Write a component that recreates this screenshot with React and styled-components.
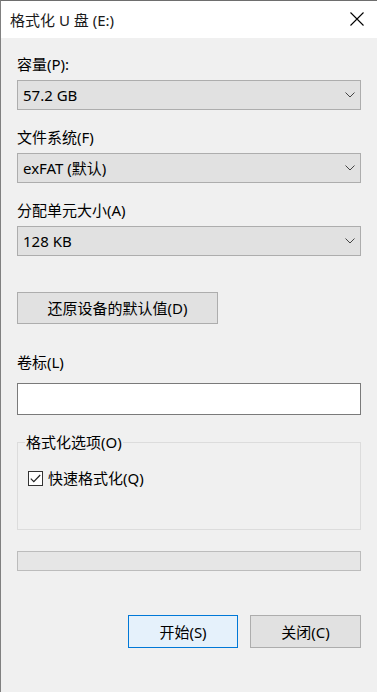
import React from "react";
import styled, { createGlobalStyle } from "styled-components";

const GlobalStyle = createGlobalStyle`
  html, body {
    margin: 0;
    padding: 0;
    background: #f0f0f0;
  }
  * {
    box-sizing: border-box;
  }
`;

const Window = styled.div`
  width: 377px;
  height: 692px;
  display: flex;
  flex-direction: column;
  background: #f0f0f0;
  border-top: 1px solid #6e6e6e;
  border-left: 1px solid #808080;
  font-family: "Noto Sans", "Noto Sans CJK SC", sans-serif;
  font-size: 15px;
  color: #000;
  overflow: hidden;
`;

const TitleBar = styled.div`
  height: 37px;
  flex: none;
  background: #fff;
  display: flex;
  align-items: center;
  justify-content: space-between;
  padding: 0 13px 0 9px;
`;

const Title = styled.span`
  font-size: 15px;
  line-height: 20px;
  color: #1a1a1a;
`;

const CloseX = styled.button`
  border: 0;
  background: transparent;
  padding: 0;
  width: 14px;
  height: 14px;
  display: flex;
  margin-top: -1px;
  cursor: pointer;
`;

const Body = styled.div`
  flex: 1;
  display: flex;
  flex-direction: column;
  padding: 0 16px;
`;

const FieldLabel = styled.div`
  line-height: 20px;
  margin-top: ${(p) => p.$top}px;
  margin-bottom: ${(p) => p.$bottom || 6}px;
`;

const Combo = styled.div`
  height: 30px;
  display: flex;
  align-items: center;
  justify-content: space-between;
  padding: 0 5px 0 5px;
  background: #e1e1e1;
  border: 1px solid #adadad;
  line-height: 20px;
`;

const Chevron = () => (
  <svg width="10" height="6" viewBox="0 0 10 6">
    <path d="M0.5 0.5 L5 5 L9.5 0.5" fill="none" stroke="#444" strokeWidth="1" />
  </svg>
);

const PushButton = styled.button`
  font: inherit;
  color: #000;
  height: ${(p) => p.$h || 33}px;
  width: ${(p) => p.$w}px;
  background: ${(p) => (p.$primary ? "#e5f1fb" : "#e1e1e1")};
  border: 1px solid ${(p) => (p.$primary ? "#0078d7" : "#adadad")};
  padding: 0;
  line-height: 20px;
  cursor: pointer;
`;

const RestoreButton = styled(PushButton)`
  margin-top: 36px;
  align-self: flex-start;
`;

const TextBox = styled.input`
  height: 32px;
  width: 100%;
  border: 1px solid #7a7a7a;
  background: #fff;
  font: inherit;
  padding: 0 4px;
  outline: none;
`;

const GroupBox = styled.fieldset`
  margin: 17px 0 0 0;
  padding: 0 0 41px 7px;
  border: 1px solid #dcdcdc;
  min-width: 0;
`;

const Legend = styled.legend`
  padding: 0 1px;
  line-height: 20px;
`;

const CheckRow = styled.label`
  display: flex;
  align-items: center;
  gap: 5px;
  margin: 16px 0 0 3px;
  line-height: 20px;
`;

const CheckBox = styled.span`
  width: 15px;
  height: 15px;
  border: 1px solid #333;
  background: #fff;
  display: flex;
  align-items: center;
  justify-content: center;
`;

const Progress = styled.div`
  height: 20px;
  margin-top: 21px;
  background: #e6e6e6;
  border: 1px solid #bcbcbc;
`;

const ButtonRow = styled.div`
  display: flex;
  justify-content: flex-end;
  gap: 12px;
  margin-top: 44px;
`;

export default function App() {
  return (
    <>
      <GlobalStyle />
      <Window>
        <TitleBar>
          <Title>格式化 U 盘 (E:)</Title>
          <CloseX aria-label="关闭">
            <svg width="14" height="14" viewBox="0 0 14 14">
              <path d="M0.5 0.5 L13.5 13.5 M13.5 0.5 L0.5 13.5" stroke="#000" strokeWidth="1.1" fill="none" />
            </svg>
          </CloseX>
        </TitleBar>
        <Body>
          <FieldLabel $top={16}>容量(P):</FieldLabel>
          <Combo>
            <span>57.2 GB</span>
            <Chevron />
          </Combo>

          <FieldLabel $top={17}>文件系统(F)</FieldLabel>
          <Combo>
            <span>exFAT (默认)</span>
            <Chevron />
          </Combo>

          <FieldLabel $top={17}>分配单元大小(A)</FieldLabel>
          <Combo>
            <span>128 KB</span>
            <Chevron />
          </Combo>

          <RestoreButton $w={201} $h={32}>还原设备的默认值(D)</RestoreButton>

          <FieldLabel $top={28} $bottom={11}>卷标(L)</FieldLabel>
          <TextBox defaultValue="" />

          <GroupBox>
            <Legend>格式化选项(O)</Legend>
            <CheckRow>
              <CheckBox>
                <svg width="11" height="9" viewBox="0 0 11 9">
                  <path d="M0.8 4.6 L3.8 7.6 L10.2 1" fill="none" stroke="#222" strokeWidth="1.2" />
                </svg>
              </CheckBox>
              快速格式化(Q)
            </CheckRow>
          </GroupBox>

          <Progress />

          <ButtonRow>
            <PushButton $primary $w={110}>开始(S)</PushButton>
            <PushButton $w={111}>关闭(C)</PushButton>
          </ButtonRow>
        </Body>
      </Window>
    </>
  );
}
